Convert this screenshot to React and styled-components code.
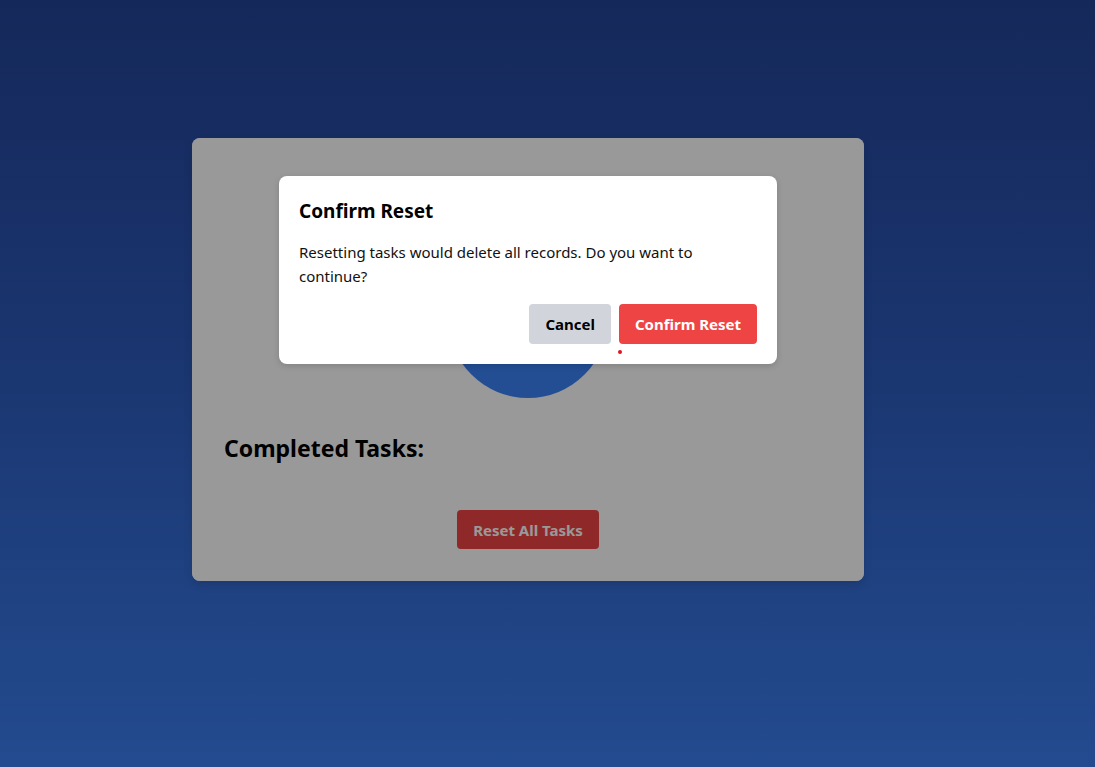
import styled, { createGlobalStyle } from "styled-components";

const GlobalStyle = createGlobalStyle`
  html, body {
    margin: 0;
    padding: 0;
    height: 100%;
  }
  body {
    font-family: "Noto Sans", "Open Sans", sans-serif;
    background: linear-gradient(180deg, #15285a 0%, #1a356f 45%, #234b8f 100%);
    min-height: 767px;
  }
`;

const Page = styled.div`
  min-height: 767px;
  display: flex;
  align-items: flex-start;
  padding: 138px 0 0 192px;
  box-sizing: border-box;
`;

const Card = styled.section`
  position: relative;
  width: 672px;
  box-sizing: border-box;
  padding: 32px;
  background: #ffffff;
  border-radius: 8px;
  box-shadow: 0 4px 8px rgba(0, 0, 0, 0.12);
  display: flex;
  flex-direction: column;
  align-items: center;
`;

const Circle = styled.div`
  width: 160px;
  height: 160px;
  margin-top: 68px;
  border-radius: 50%;
  background: #3b82f6;
`;

const Heading = styled.h2`
  align-self: stretch;
  margin: 34px 0 0;
  font-size: 23px;
  line-height: 32px;
  font-weight: 700;
  color: #000;
`;

const Button = styled.button`
  position: relative;
  border: none;
  border-radius: 4px;
  height: ${(p) => p.$h || 40}px;
  padding: 0 16px;
  font-family: inherit;
  font-size: 15px;
  font-weight: 700;
  cursor: pointer;
  background: ${(p) => p.$bg};
  color: ${(p) => p.$fg};
`;

const ResetButton = styled(Button)`
  margin-top: 46px;
`;

const Overlay = styled.div`
  position: absolute;
  inset: 0;
  border-radius: 8px;
  background: rgba(0, 0, 0, 0.4);
`;

const Modal = styled.div`
  position: absolute;
  top: 38px;
  left: 87px;
  width: 498px;
  box-sizing: border-box;
  padding: 20px;
  background: #fff;
  border-radius: 8px;
  box-shadow: 0 2px 6px rgba(0, 0, 0, 0.15);
`;

const ModalTitle = styled.h3`
  margin: 1px 0 0;
  font-size: 19px;
  line-height: 28px;
  font-weight: 700;
  color: #000;
`;

const ModalText = styled.p`
  margin: 15px 0 0;
  font-size: 15px;
  line-height: 24px;
  color: #111;
`;

const Actions = styled.div`
  display: flex;
  justify-content: flex-end;
  gap: 8px;
  margin-top: 16px;
`;

const Dot = styled.span`
  position: absolute;
  left: -1px;
  top: calc(100% + 6px);
  width: 4px;
  height: 4px;
  border-radius: 50%;
  background: #e3141c;
`;

export default function App() {
  return (
    <>
      <GlobalStyle />
      <Page>
        <Card>
          <Circle />
          <Heading>Completed Tasks:</Heading>
          <ResetButton $bg="#ef4444" $fg="#fff" $h={39}>
            Reset All Tasks
          </ResetButton>
          <Overlay />
          <Modal>
            <ModalTitle>Confirm Reset</ModalTitle>
            <ModalText>
              Resetting tasks would delete all records. Do you want to continue?
            </ModalText>
            <Actions>
              <Button $bg="#d1d5db" $fg="#000">
                Cancel
              </Button>
              <Button $bg="#ef4444" $fg="#fff">
                Confirm Reset
                <Dot />
              </Button>
            </Actions>
          </Modal>
        </Card>
      </Page>
    </>
  );
}
